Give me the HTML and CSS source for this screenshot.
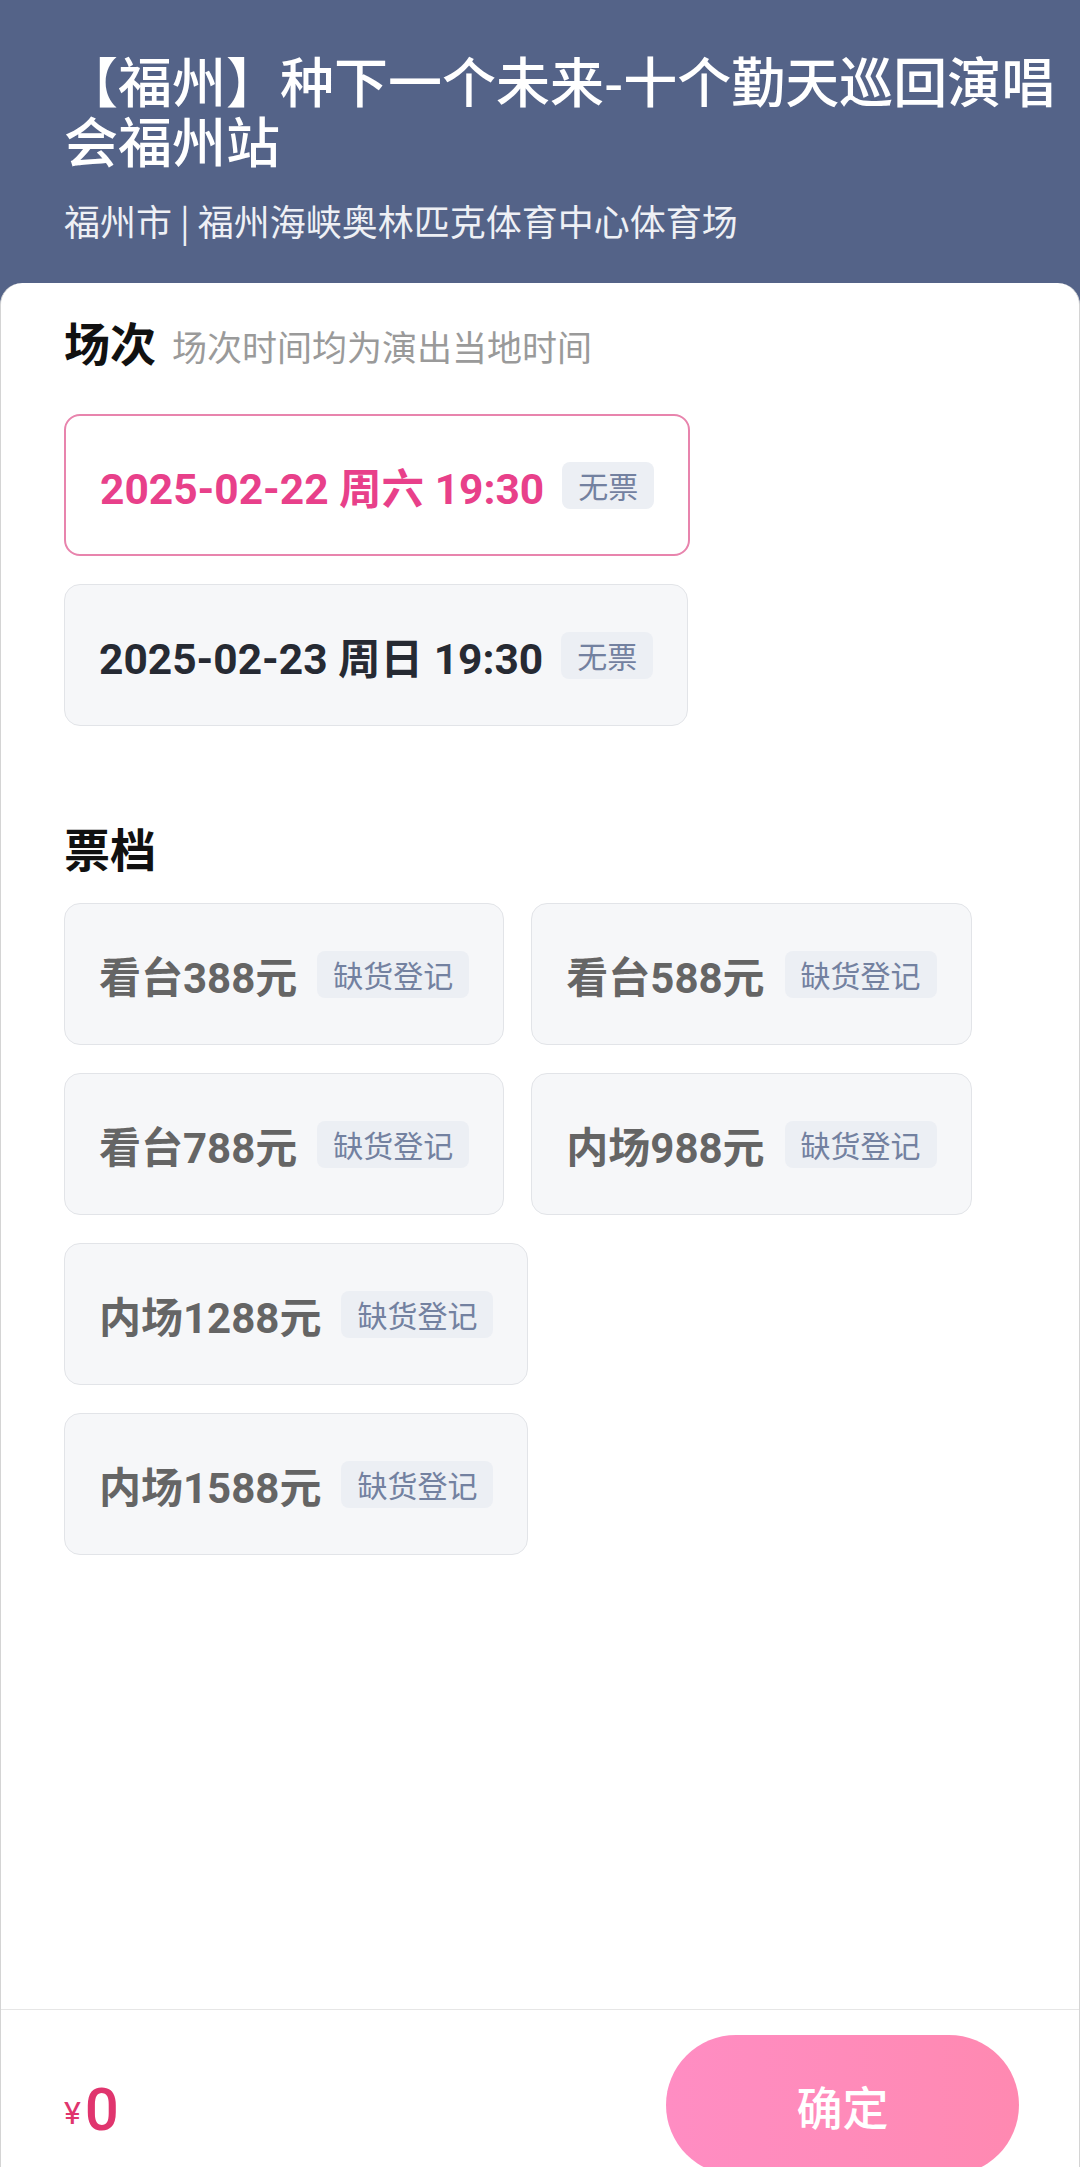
FILE: index.html
```html
<!DOCTYPE html>
<html lang="zh-CN">
<head>
<meta charset="utf-8">
<title>场次票档</title>
<link rel="stylesheet" href="styles.css">
</head>
<body>
<div class="page">
  <header class="hero">
    <h1 class="hero-title">【福州】种下一个未来-十个勤天巡回演唱会福州站</h1>
    <p class="hero-sub">福州市 | 福州海峡奥林匹克体育中心体育场</p>
  </header>
  <main class="panel">
    <div class="content">
      <section class="block">
        <div class="block-head">
          <h2 class="block-title">场次</h2>
          <span class="block-note">场次时间均为演出当地时间</span>
        </div>
        <div class="sessions">
          <div class="opt session active">
            <span class="opt-label">2025-02-22 周六 19:30</span>
            <span class="tag">无票</span>
          </div>
          <div class="opt session">
            <span class="opt-label">2025-02-23 周日 19:30</span>
            <span class="tag">无票</span>
          </div>
        </div>
      </section>
      <section class="block tickets-block">
        <div class="block-head">
          <h2 class="block-title">票档</h2>
        </div>
        <div class="tickets">
          <div class="opt ticket"><span class="opt-label">看台388元</span><span class="tag">缺货登记</span></div>
          <div class="opt ticket"><span class="opt-label">看台588元</span><span class="tag">缺货登记</span></div>
          <div class="opt ticket"><span class="opt-label">看台788元</span><span class="tag">缺货登记</span></div>
          <div class="opt ticket"><span class="opt-label">内场988元</span><span class="tag">缺货登记</span></div>
          <div class="opt ticket"><span class="opt-label">内场1288元</span><span class="tag">缺货登记</span></div>
          <div class="opt ticket"><span class="opt-label">内场1588元</span><span class="tag">缺货登记</span></div>
        </div>
      </section>
    </div>
    <footer class="bar">
      <div class="price"><span class="yen">¥</span><span class="amount">0</span></div>
      <button class="confirm" type="button">确定</button>
    </footer>
  </main>
</div>
</body>
</html>
```
FILE: styles.css
```css
* { box-sizing: border-box; }
html, body {
  margin: 0;
  padding: 0;
}
body {
  width: 1080px;
  height: 2167px;
  overflow: hidden;
  background: #546388;
  font-family: "Noto Sans CJK SC", "Noto Sans", sans-serif;
}
.page {
  height: 2167px;
  display: flex;
  flex-direction: column;
}
.hero {
  height: 283px;
  flex: none;
  padding: 50px 10px 0 64px;
  color: #fff;
}
.hero-title {
  margin: 0;
  font-size: 54px;
  line-height: 60px;
  font-weight: 500;
}
.hero-sub {
  margin: 26px 0 0;
  font-size: 36px;
  line-height: 48px;
  color: #eef0f5;
  font-weight: 400;
}
.panel {
  flex: 1;
  display: flex;
  flex-direction: column;
  background: #fff;
  border-radius: 22px 22px 0 0;
  border-left: 1px solid #d4d4d4;
  border-right: 1px solid #d4d4d4;
  overflow: hidden;
}
.content {
  flex: 1;
  padding: 28px 40px 0 63px;
}
.block-head {
  display: flex;
  align-items: baseline;
  gap: 16px;
}
.block-title {
  margin: 0;
  font-size: 46px;
  line-height: 60px;
  font-weight: 700;
  color: #111;
}
.block-note {
  font-size: 35px;
  color: #9a9a9a;
  font-weight: 400;
}
.sessions {
  margin-top: 43px;
  display: flex;
  flex-direction: column;
  align-items: flex-start;
  gap: 28px;
}
.opt {
  display: inline-flex;
  align-items: center;
  height: 142px;
  padding: 0 34px;
  border-radius: 16px;
  background: #f6f7f9;
  border: 1.5px solid #e2e4e8;
}
.opt-label {
  font-family: "Roboto", "Noto Sans CJK SC", sans-serif;
  font-weight: 700;
}
.session .opt-label {
  font-size: 42.5px;
  color: #262a33;
}
.session.active {
  background: #fff;
  border: 2px solid #e884ad;
}
.session.active .opt-label {
  color: #e8408a;
}
.tag {
  display: inline-flex;
  align-items: center;
  height: 47px;
  padding: 0 16px;
  border-radius: 8px;
  background: #eceff4;
  color: #7381a0;
  font-size: 30px;
  font-weight: 400;
  font-family: "Noto Sans CJK SC", sans-serif;
}
.session .tag {
  margin-left: 18px;
}
.tickets-block {
  margin-top: 91px;
}
.tickets {
  margin-top: 26px;
  display: flex;
  flex-wrap: wrap;
  gap: 28px 27px;
  max-width: 930px;
}
.ticket .opt-label {
  font-size: 42px;
  color: #656565;
}
.ticket .tag {
  margin-left: 20px;
}
.bar {
  flex: none;
  height: 158px;
  border-top: 1px solid #e6e6e6;
  padding: 25px 60px 0 63px;
  display: flex;
  justify-content: space-between;
  align-items: flex-start;
  overflow: hidden;
}
.price {
  height: 140px;
  display: flex;
  align-items: center;
  padding-top: 8px;
  color: #e0356e;
  font-family: "Roboto", sans-serif;
}
.yen {
  font-size: 32px;
  margin-right: 4px;
  padding-top: 8px;
}
.amount {
  font-size: 60px;
  font-weight: 500;
}
.confirm {
  flex: none;
  width: 353px;
  height: 140px;
  border: none;
  border-radius: 70px;
  background: linear-gradient(90deg, #ff8dc3, #ff89b1);
  color: #fff;
  font-family: "Noto Sans CJK SC", sans-serif;
  font-size: 46px;
  font-weight: 500;
  padding: 0;
}
```
